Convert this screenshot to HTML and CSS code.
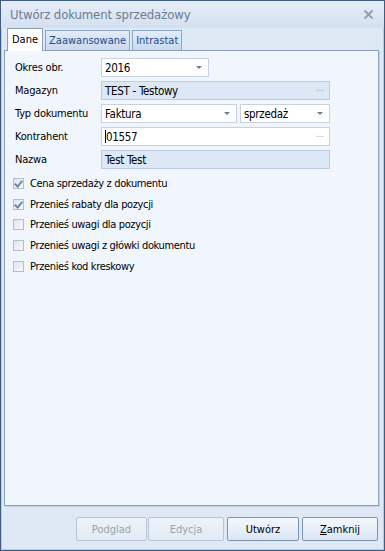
FILE: index.html
```html
<!DOCTYPE html>
<html lang="pl">
<head>
    <meta charset="UTF-8">
    <title>Utwórz dokument sprzedażowy</title>
    <link rel="stylesheet" href="styles.css">
</head>
<body>
    <div class="window">
        <div class="titlebar">
            <span class="title">Utwórz dokument sprzedażowy</span>
            <svg class="close" width="11" height="11" viewBox="0 0 11 11">
                <path d="M1.5 1.5 L9.5 9.5 M9.5 1.5 L1.5 9.5" stroke="#939fae" stroke-width="1.8" fill="none"/>
            </svg>
        </div>

        <div class="tabs">
            <div class="tab active">Dane</div>
            <div class="tab">Zaawansowane</div>
            <div class="tab">Intrastat</div>
        </div>

        <div class="panel">
            <div class="row">
                <label>Okres obr.</label>
                <div class="field combo short">2016<span class="arrow"></span></div>
            </div>
            <div class="row">
                <label>Magazyn</label>
                <div class="field readonly wide">TEST - Testowy<span class="dots">...</span></div>
            </div>
            <div class="row">
                <label>Typ dokumentu</label>
                <div class="field combo typ">Faktura<span class="arrow"></span></div>
                <div class="field combo kind">sprzedaż<span class="arrow"></span></div>
            </div>
            <div class="row">
                <label>Kontrahent</label>
                <div class="field wide"><span class="caret"></span>01557<span class="dots">...</span></div>
            </div>
            <div class="row">
                <label>Nazwa</label>
                <div class="field readonly wide">Test Test</div>
            </div>

            <div class="checks">
                <div class="check"><span class="box checked"></span>Cena sprzedaży z dokumentu</div>
                <div class="check"><span class="box checked"></span>Przenieś rabaty dla pozycji</div>
                <div class="check"><span class="box"></span>Przenieś uwagi dla pozycji</div>
                <div class="check"><span class="box"></span>Przenieś uwagi z główki dokumentu</div>
                <div class="check"><span class="box"></span>Przenieś kod kreskowy</div>
            </div>
        </div>

        <div class="footer">
            <button class="preview" disabled>Podglad</button>
            <button class="edit" disabled>Edycja</button>
            <button class="create">Utwórz</button>
            <button class="close-btn"><u>Z</u>amknij</button>
        </div>
    </div>
</body>
</html>
```

FILE: styles.css
```css
* {
    margin: 0;
    padding: 0;
    box-sizing: border-box;
}

body {
    font-family: "DejaVu Sans Condensed", "DejaVu Sans", sans-serif;
    font-stretch: condensed;
    font-size: 11px;
    letter-spacing: -0.2px;
    color: #000000;
    background: #dfe9f5;
}

.window {
    width: 385px;
    height: 551px;
    display: flex;
    flex-direction: column;
    background: #dfe9f5;
    border: 1px solid #3f5d80;
    box-shadow: inset 0 0 0 1px #b9cbe2;
}

.titlebar {
    height: 27px;
    flex: none;
    display: flex;
    align-items: center;
    justify-content: space-between;
    padding: 0 10px 0 9px;
    background: linear-gradient(#e6eef8, #d3e0f1);
}

.title {
    font-size: 13px;
    letter-spacing: -0.1px;
    color: #6b7c90;
}

.tabs {
    height: 22px;
    flex: none;
    display: flex;
    align-items: flex-end;
    padding-left: 6px;
}

.tab {
    height: 20px;
    padding: 3px 3px 0 3px;
    margin-right: 2px;
    letter-spacing: 0;
    color: #1c4a8b;
    background: linear-gradient(#e4edf8, #c8d9ef);
    border: 1px solid #8ea6c6;
    border-bottom: none;
}

.tab.active {
    height: 23px;
    padding: 4px 4px 0 4px;
    color: #000000;
    background: #ffffff;
    border-color: #8d9fb9;
    position: relative;
    top: 1px;
}

.panel {
    height: 456px;
    flex: none;
    margin: 0 5px 0 3px;
    padding: 7px 0 0 10px;
    background: #f1f6fd;
    border: 1px solid #8d9fb9;
    box-shadow: 1px 1px 0 #c2d1e4;
}

.row {
    display: flex;
    align-items: center;
    height: 19px;
    margin-bottom: 4px;
}

.row label {
    width: 86px;
    flex: none;
}

.field {
    height: 19px;
    position: relative;
    padding: 2px 0 0 3px;
    font-size: 11.5px;
    letter-spacing: -0.3px;
    background: #ffffff;
    border: 1px solid #c6d2e2;
    margin-right: 3px;
}

.field.readonly {
    background: #dde8f6;
    border-color: #bccbdf;
}

.short {
    width: 108px;
}

.wide {
    width: 229px;
}

.typ {
    width: 136px;
}

.kind {
    width: 90px;
}

.arrow {
    position: absolute;
    right: 6px;
    top: 7px;
    border-left: 3px solid transparent;
    border-right: 3px solid transparent;
    border-top: 3px solid #6f7f92;
}

.dots {
    position: absolute;
    right: 5px;
    top: 0;
    font-family: "Liberation Sans", Arial, sans-serif;
    font-size: 10px;
    letter-spacing: 0;
    color: #98a4b3;
}

.caret {
    display: inline-block;
    width: 1px;
    height: 13px;
    background: #000000;
    vertical-align: -2px;
}

.checks {
    margin: 4px 0 0 -2px;
    display: flex;
    flex-direction: column;
    letter-spacing: -0.35px;
}

.check {
    height: 20.75px;
    display: flex;
    align-items: center;
}

.box {
    width: 11px;
    height: 11px;
    margin-right: 6px;
    border: 1px solid #b5bfcc;
    background: linear-gradient(135deg, #e2e5ea, #f7f8fa);
    position: relative;
}

.box.checked::after {
    content: "";
    position: absolute;
    left: 2px;
    top: 0;
    width: 3px;
    height: 6px;
    border: solid #6c86a8;
    border-width: 0 2px 2px 0;
    transform: rotate(40deg);
}

.footer {
    flex: 1;
    display: flex;
    justify-content: flex-end;
    align-items: flex-start;
    padding: 11px 6px 0 0;
}

button {
    height: 24px;
    font-family: "DejaVu Sans Condensed", "DejaVu Sans", sans-serif;
    font-stretch: condensed;
    font-size: 11px;
    color: #000000;
    background: linear-gradient(#f4f8fd, #dbe6f4);
    border: 1px solid #7f93ae;
    border-radius: 2px;
}

.preview {
    width: 71px;
    margin-right: 1px;
}

.edit {
    width: 76px;
    margin-right: 3px;
}

.create {
    width: 72px;
    margin-right: 3px;
}

.close-btn {
    width: 76px;
}

button:disabled {
    color: #9aa3ad;
    border-color: #b9c5d5;
    background: linear-gradient(#eef3fa, #e2eaf5);
}
```
